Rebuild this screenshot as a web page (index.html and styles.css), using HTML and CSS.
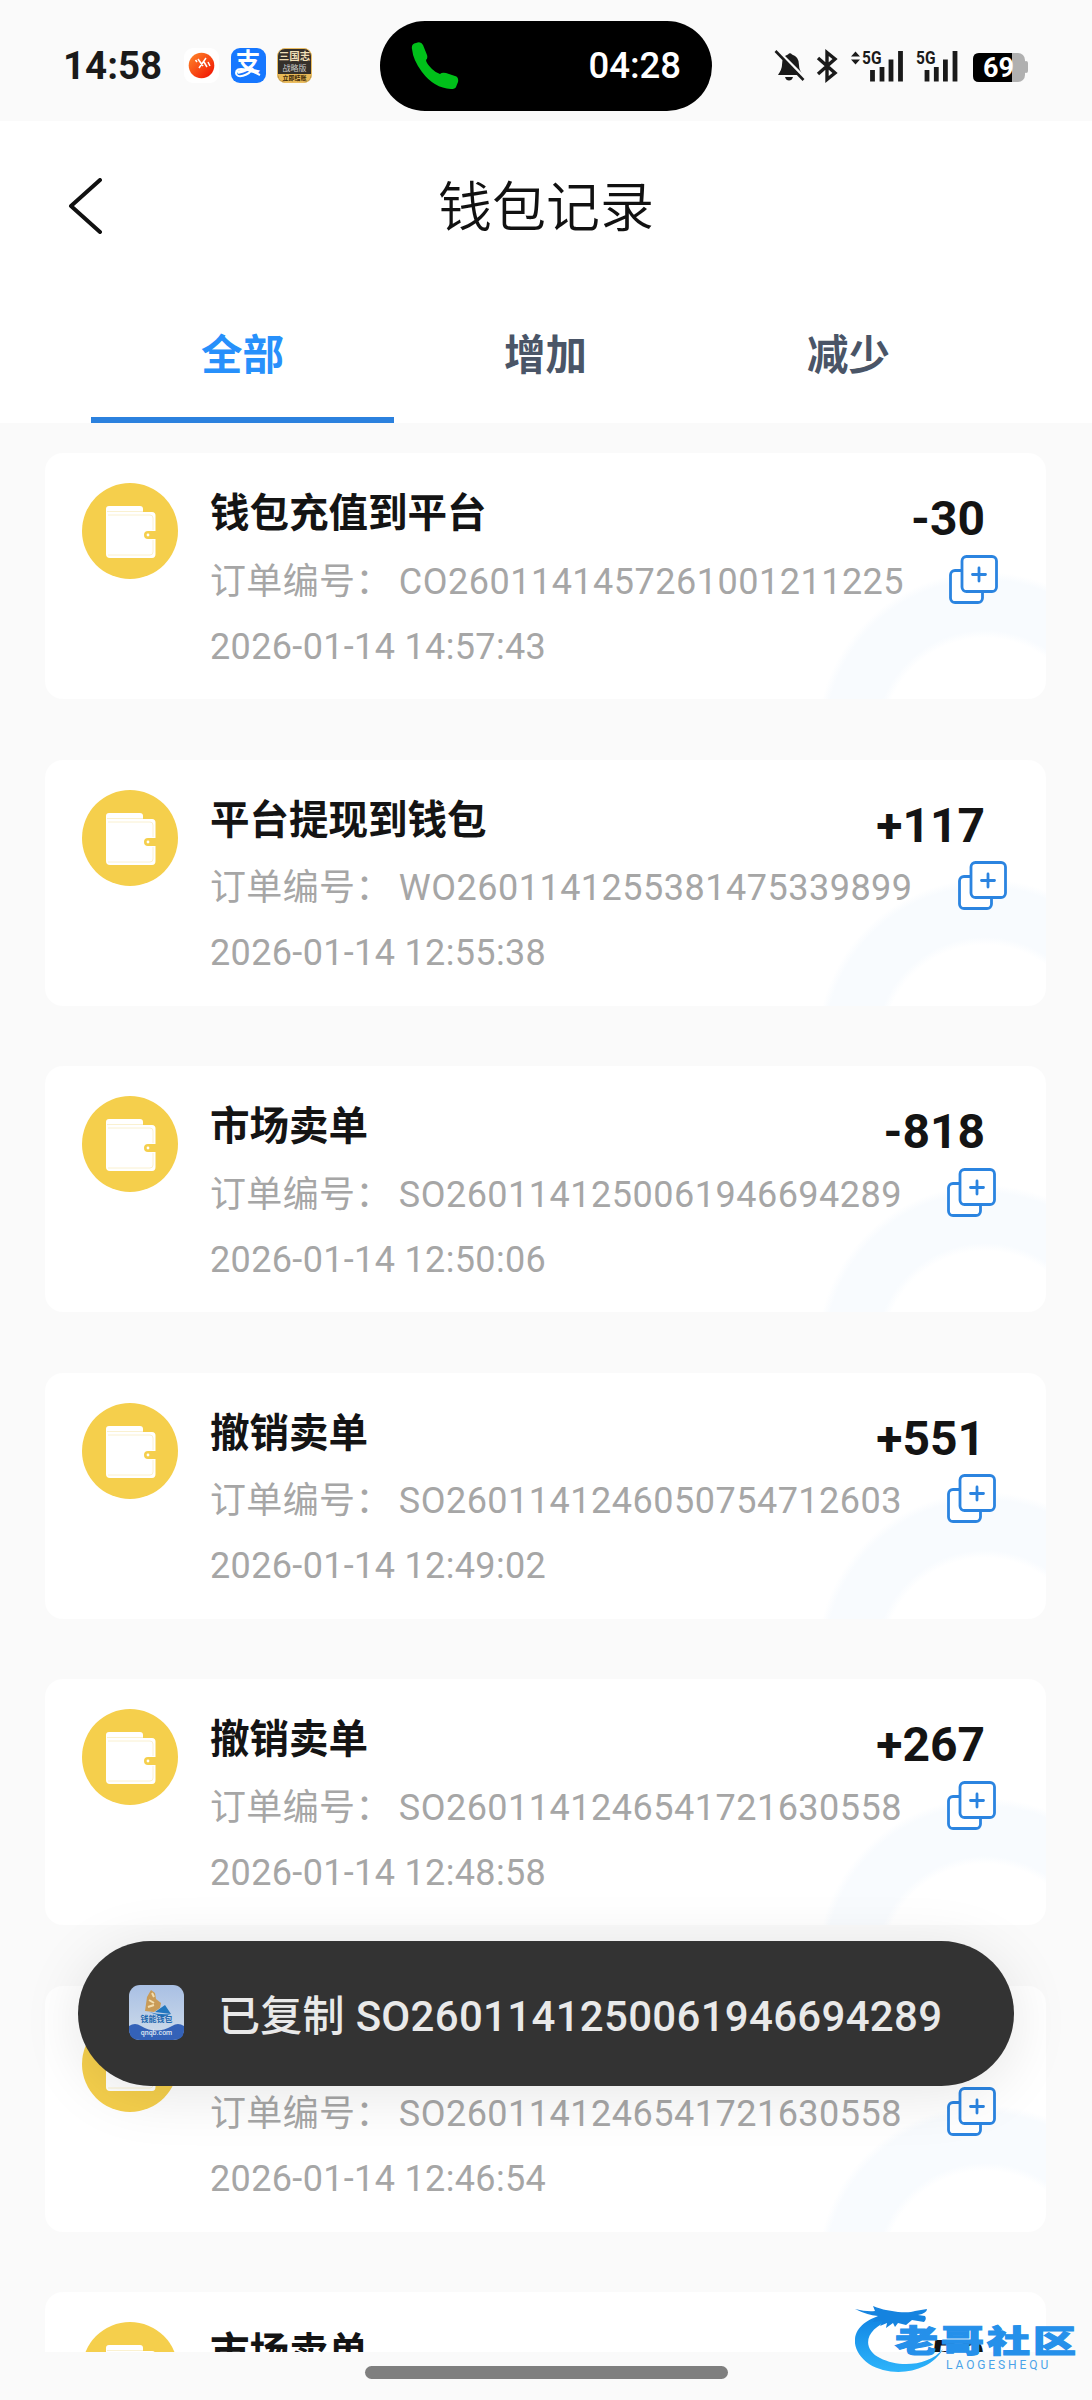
FILE: index.html
```html
<!DOCTYPE html>
<html lang="zh-CN">
<head>
  <meta charset="UTF-8">
  <title>钱包记录</title>
  <link rel="stylesheet" href="styles.css">
</head>
<body>

<!--公用图标-->
<svg class="defs" width="0" height="0">
  <symbol id="wallet" viewBox="0 0 96 96">
    <circle cx="48" cy="48" r="48" fill="#f5cf4c"/>
    <path d="M24 29v-3q0-3 3-3h31q3 0 3 3v3z" fill="#fff"/>
    <path d="M24 29h46q3.500 0 3.500 3.500V48H66a4 4 0 0 0 0 8h7.500v15q0 4-3.500 4H28q-4 0-4-4z" fill="#fff"/>
    <path d="M25 28.500h36M26 32h42q3 0 3 3v12M71 57v12q0 3-3 3H26" fill="none" stroke="#f9edc4" stroke-width=".8"/>
    <circle cx="66" cy="52" r="1.400" fill="#fff"/>
  </symbol>
  <symbol id="copy" viewBox="0 0 49 49">
    <rect x="1.500" y="15.500" width="32" height="32" rx="4.500"/>
    <rect x="13" y="1.500" width="34.500" height="35" rx="4.500"/>
    <path d="M30 13v13M23.500 19.500h13"/>
  </symbol>
</svg>

<!--状态栏-->
<div class="status">
  <span class="time">14:58</span>
  <div class="apps">
    <svg class="app-music" viewBox="0 0 35 35">
      <rect width="35" height="35" rx="9" fill="#fff"/>
      <defs><linearGradient id="red" x1="0" y1="0" x2="1" y2="1"><stop offset="0" stop-color="#ff8a2a"/><stop offset="1" stop-color="#f00c00"/></linearGradient></defs>
      <circle cx="17.500" cy="17.500" r="12.800" fill="url(#red)"/>
      <path d="M11.500 12l1.500 2M14 11l5 7M22 10l-7 10M20 14l3 5M24 14l2 4" stroke="#fff" stroke-width="1.500"/>
    </svg>
    <span class="app-pay">支
      <svg viewBox="0 0 35 35"><path d="M22 20C18 28 5 31 5 25c0-7 12-4 24 2" fill="none" stroke="#fff" stroke-width="2"/></svg>
    </span>
    <span class="app-game"><b>三国志</b><i>战略版</i><em>立即结账</em></span>
  </div>
  <div class="island">
    <svg width="48" height="48" viewBox="0 0 48 48"><path d="M1 7Q0 2 5 1q5-2 7 2l4 10q1 3-1 5 0 3 6 9 4 4 8 5 2-2 6-1l9 3q4 1 3 6l-2 5q-1 2-5 2-17-1-29-17Q2 18 1 7z" fill="#00c01a"/></svg>
    <span>04:28</span>
  </div>
  <svg class="signals" width="258" height="36" viewBox="0 0 258 36">
    <!--静音-->
    <path d="M6 27q4-6 4-10 0-9 6-10.500 2-2.500 4 0 7 2 7 10.500 0 5 4 10z" fill="#1a1a1a"/>
    <path d="M13 29h8q-1 3.500-4 3.500t-4-3.500z" fill="#1a1a1a"/>
    <path d="M6 3l27 27" stroke="#fafafa" stroke-width="3"/>
    <path d="M3.500 3l28 29" stroke="#1a1a1a" stroke-width="2.600"/>
    <!--蓝牙-->
    <path d="M46 10l17 15-8 6.500V4.500l8 6.500-17 15" fill="none" stroke="#1a1a1a" stroke-width="3.400"/>
    <!--信号-->
    <path d="M79 8.500l4.500-5 4.500 5zM79 11.500l4.500 5 4.500-5z" fill="#1a1a1a"/>
    <text x="90" y="15.500" textLength="19.500" lengthAdjust="spacingAndGlyphs">5G</text>
    <path d="M100.500 22v11.500M110 19v14.500M119 11.500v22M128.500 3v30.500M155 22v11.500M164.300 19v14.500M173.400 11.500v22M183 3v30.500" stroke="#1a1a1a" stroke-width="4.800"/>
    <text x="144" y="15.500" textLength="19.500" lengthAdjust="spacingAndGlyphs">5G</text>
    <!--电量-->
    <rect x="201" y="5" width="52" height="29" rx="7" fill="#b0b0b0"/>
    <rect x="252" y="13" width="4" height="12" rx="2" fill="#b0b0b0"/>
    <path d="M207 5h33v29h-33q-6 0-6-6V11q0-6 6-6z" fill="#000"/>
    <text class="power" x="211" y="29">69</text>
  </svg>
</div>

<!--标题-->
<div class="header">
  <svg width="36" height="56" viewBox="0 0 36 56"><path d="M33 2L4 28l29 26" fill="none" stroke="#111" stroke-width="4" stroke-linecap="round" stroke-linejoin="round"/></svg>
  <h1>钱包记录</h1>
</div>

<ul class="tabs">
  <li class="now">全部</li>
  <li>增加</li>
  <li>减少</li>
</ul>

<!--记录列表-->
<ul class="list">
  <li>
    <svg class="wallet"><use href="#wallet"/></svg>
    <div class="info">
      <h2>钱包充值到平台</h2>
      <p>订单编号： <span>CO2601141457261001211225</span><svg class="copy"><use href="#copy"/></svg></p>
      <p>2026-01-14 14:57:43</p>
    </div>
    <strong>-30</strong>
  </li>
  <li>
    <svg class="wallet"><use href="#wallet"/></svg>
    <div class="info">
      <h2>平台提现到钱包</h2>
      <p>订单编号： <span>WO2601141255381475339899</span><svg class="copy"><use href="#copy"/></svg></p>
      <p>2026-01-14 12:55:38</p>
    </div>
    <strong>+117</strong>
  </li>
  <li>
    <svg class="wallet"><use href="#wallet"/></svg>
    <div class="info">
      <h2>市场卖单</h2>
      <p>订单编号： <span>SO2601141250061946694289</span><svg class="copy"><use href="#copy"/></svg></p>
      <p>2026-01-14 12:50:06</p>
    </div>
    <strong>-818</strong>
  </li>
  <li>
    <svg class="wallet"><use href="#wallet"/></svg>
    <div class="info">
      <h2>撤销卖单</h2>
      <p>订单编号： <span>SO2601141246050754712603</span><svg class="copy"><use href="#copy"/></svg></p>
      <p>2026-01-14 12:49:02</p>
    </div>
    <strong>+551</strong>
  </li>
  <li>
    <svg class="wallet"><use href="#wallet"/></svg>
    <div class="info">
      <h2>撤销卖单</h2>
      <p>订单编号： <span>SO2601141246541721630558</span><svg class="copy"><use href="#copy"/></svg></p>
      <p>2026-01-14 12:48:58</p>
    </div>
    <strong>+267</strong>
  </li>
  <li>
    <svg class="wallet"><use href="#wallet"/></svg>
    <div class="info">
      <!--标题被提示挡住-->
      <h2></h2>
      <p>订单编号： <span>SO2601141246541721630558</span><svg class="copy"><use href="#copy"/></svg></p>
      <p>2026-01-14 12:46:54</p>
    </div>
  </li>
  <li>
    <svg class="wallet"><use href="#wallet"/></svg>
    <div class="info">
      <h2>市场卖单</h2>
    </div>
    <strong>-50</strong>
  </li>
</ul>

<div class="home"></div>

<!--复制提示-->
<div class="toast">
  <div class="logo">
    <svg viewBox="0 0 55 55">
      <defs><linearGradient id="sky" x1="0" y1="0" x2="0" y2="1"><stop offset="0" stop-color="#a9c0e4"/><stop offset="1" stop-color="#cfdcea"/></linearGradient></defs>
      <rect width="55" height="55" rx="11" fill="url(#sky)"/>
      <path d="M0 41q6-4 12 0 15 9 31 0 6-4 12 0v4q0 10-11 10H11Q0 55 0 44z" fill="#3462b8"/>
      <path d="M18 12l4-7 4 3 1 6 5 4-1 5-6 4-9-1 1-7z" fill="#c99b57"/>
      <path d="M20 15l5 3M19 22l6-2M23 8l2 4" stroke="#f3dfb0" stroke-width="2"/>
      <path d="M36 20l-10 7 16 2zM20 27q10 3 22 2l-8 3z" fill="#2277be"/>
    </svg>
    <b>钱能钱包</b>
    <i>qnqb.com</i>
  </div>
  <span>已复制 SO2601141250061946694289</span>
</div>

<!--水印-->
<div class="mark">
  <svg width="110" height="72" viewBox="0 0 110 72">
    <defs><linearGradient id="blue" x1="0" y1="0" x2="0" y2="1"><stop offset="0" stop-color="#1183e2"/><stop offset="1" stop-color="#2db4fb"/></linearGradient></defs>
    <path d="M32 9C-6 16-8 44 14 59c24 15 62 8 74-15-14 17-44 19-63 9C7 44 8 24 38 14z" fill="url(#blue)"/>
    <path d="M0 4q12 3 20 2l-2-5q8 3 13 4l12 2q12 1 17-1l12-2q0 4-9 6l7 1q2 3-1 6l-12-2-6 5-8-2-3 4-2-4-7 5 1-5-7 3 3-5q-6 0-10 1 3-4 5-6Q12 10 0 4z" fill="#1583df"/>
  </svg>
  <b>老哥社区</b>
  <i>LAOGESHEQU</i>
</div>

</body>
</html>
```
FILE: styles.css
```css
* {
  margin: 0;
  padding: 0;
  list-style: none;
  box-sizing: border-box;
}

body {
  width: 1092px;
  height: 2400px;
  position: relative;
  overflow: hidden;
  display: flex;
  flex-direction: column;
  background-color: #fafafa;
  color: #141414;
  font-family: Roboto, "Noto Sans CJK SC", sans-serif;
}

i,
em {
  font-style: normal;
}

.defs {
  position: absolute;
}

/*状态栏*/
.status {
  height: 121px;
  flex: none;
  padding: 10px 62px 0 63px;
  display: flex;
  align-items: center;
}

.time {
  width: 121px;
  font-size: 38.5px;
  font-weight: 700;
  color: #1a1a1a;
}

.apps {
  width: 196px;
  display: flex;
  gap: 11.500px;
}

.apps > * {
  width: 35px;
  height: 35px;
}

.app-pay {
  position: relative;
  border-radius: 9px;
  background-color: #1677ff;
  color: #fff;
  font-size: 25px;
  font-weight: 700;
  line-height: 30px;
  text-align: center;
}

.app-pay svg {
  position: absolute;
  left: 0;
  top: 0;
}

.app-game {
  border-radius: 8px;
  overflow: hidden;
  border: 1.5px solid #e9bc62;
  background-color: #35302a;
  display: flex;
  flex-direction: column;
  align-items: center;
  line-height: 1;
}

.app-game b {
  font-size: 10.5px;
  line-height: 15px;
  color: #f0dfb6;
}

.app-game i {
  font-size: 8px;
  line-height: 10px;
  color: #ccc;
}

.app-game em {
  width: 100%;
  background-color: #e8b957;
  color: #3a2608;
  font-size: 6px;
  font-weight: 700;
  line-height: 8px;
  text-align: center;
}

.island {
  width: 332px;
  height: 90px;
  padding: 0 31px 0 31px;
  border-radius: 45px;
  background-color: #000;
  color: #fff;
  display: flex;
  align-items: center;
  justify-content: space-between;
  font-size: 36.5px;
  font-weight: 500;
}

.signals {
  margin-left: 60px;
}

.signals text {
  font-size: 17.500px;
  font-weight: 700;
  fill: #1a1a1a;
}

.signals .power {
  font-size: 27px;
  fill: #fff;
}

/*标题*/
.header {
  height: 172px;
  flex: none;
  padding: 0 67px 2px;
  display: grid;
  grid-template-columns: 36px 1fr 36px;
  align-items: center;
  background-color: #fff;
}

.header h1 {
  text-align: center;
  font-size: 54px;
  line-height: 76px;
  padding-top: 5px;
  font-weight: 350;
  color: #111;
}

.tabs {
  height: 130px;
  flex: none;
  padding: 0 92px 0 91px;
  background-color: #fff;
  display: flex;
}

.tabs li {
  flex: 1;
  height: 130px;
  text-align: center;
  line-height: 125px;
  font-size: 41.500px;
  font-weight: 700;
  color: #4a5567;
}

.tabs .now {
  color: #2790fb;
  border-bottom: 6px solid #2b81de;
}

/*记录列表*/
.list {
  height: 1929px;
  flex: none;
  padding: 30px 46px 0 45px;
  overflow: hidden;
  display: flex;
  flex-direction: column;
  gap: 60.500px;
}

.list li {
  height: 246px;
  flex: none;
  padding: 31px 61px 0 37px;
  border-radius: 18px;
  /*右下角的圆环*/
  background: radial-gradient(circle at 940px 287px, #fff 102px, #f8fbfe 110px, #f8fbfe 160px, #fff 168px);
  display: flex;
}

.wallet {
  width: 96px;
  height: 96px;
  flex: none;
  margin: -1px 32px 0 0;
}

.info {
  flex: 1;
  min-width: 0;
  white-space: nowrap;
}

.info h2 {
  height: 58px;
  font-size: 39.500px;
  line-height: 60px;
  font-weight: 700;
}

.info p {
  height: 65px;
  display: flex;
  align-items: center;
  padding-top: 14px;
  font-size: 36px;
  line-height: 50px;
  letter-spacing: .35px;
  color: #a6a6a6;
}

.info p span {
  margin-left: 7px;
  letter-spacing: .5px;
}

.copy {
  width: 49px;
  height: 49px;
  flex: none;
  margin: -5px 0 0 45px;
  fill: #fff;
  stroke: #2b84e0;
  stroke-width: 2.800;
  stroke-linecap: round;
}

.list strong {
  width: 0;
  height: 70px;
  display: flex;
  justify-content: flex-end;
  font-size: 48px;
  line-height: 69px;
  font-weight: 700;
}

/*底部横条*/
.home {
  width: 363px;
  height: 13px;
  margin: 14px auto 0;
  border-radius: 7px;
  background-color: #7f7f7f;
}

.toast {
  width: 936px;
  height: 145px;
  position: absolute;
  left: 78px;
  top: 1941px;
  padding: 0 0 2px 51px;
  border-radius: 73px;
  background-color: #333;
  box-shadow: 0 8px 60px rgba(0, 0, 0, .1);
  display: flex;
  align-items: center;
  font-size: 42px;
  font-weight: 500;
  letter-spacing: .3px;
  white-space: nowrap;
  color: #e9e9e9;
}

.logo {
  width: 55px;
  height: 55px;
  position: relative;
  margin-right: 34px;
  letter-spacing: 0;
}

.logo svg {
  display: block;
}

.logo b,
.logo i {
  position: absolute;
  left: 0;
  width: 55px;
  text-align: center;
  line-height: 1;
}

.logo b {
  top: 31px;
  font-size: 8px;
  color: #1f68ae;
}

.logo i {
  top: 45px;
  font-size: 7px;
  color: #dfe6f2;
}

.mark {
  position: absolute;
  left: 855px;
  top: 2305px;
  width: 230px;
  height: 72px;
}

.mark b {
  position: absolute;
  left: 40px;
  top: 7px;
  font-size: 43px;
  line-height: 58px;
  font-weight: 900;
  letter-spacing: 3px;
  white-space: nowrap;
  transform: scaleY(.72);
  color: #2590ea;
  -webkit-text-stroke: 1.500px #2590ea;
}

.mark i {
  position: absolute;
  left: 91px;
  top: 54px;
  font-size: 12px;
  line-height: 13px;
  letter-spacing: 2.900px;
  color: #4aa3e8;
}
```
